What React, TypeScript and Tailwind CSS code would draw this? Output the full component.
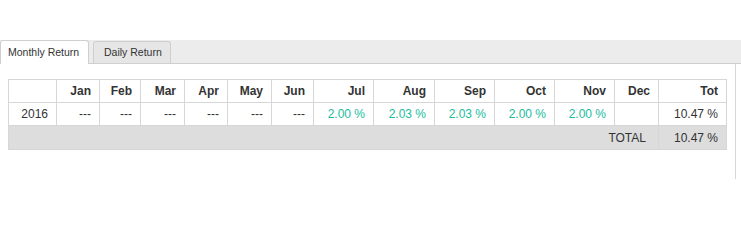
import React from "react";

type Cell = { value: string; positive?: boolean };

const MONTHS = ["Jan", "Feb", "Mar", "Apr", "May", "Jun", "Jul", "Aug", "Sep", "Oct", "Nov", "Dec"];

// column widths in px, first is the year column, last is the total
const COL_WIDTHS = [48, 43, 41, 44, 43, 44, 42, 60, 61, 60, 60, 60, 44, 68];

const ROW_2016: Cell[] = [
  { value: "---" },
  { value: "---" },
  { value: "---" },
  { value: "---" },
  { value: "---" },
  { value: "---" },
  { value: "2.00 %", positive: true },
  { value: "2.03 %", positive: true },
  { value: "2.03 %", positive: true },
  { value: "2.00 %", positive: true },
  { value: "2.00 %", positive: true },
  { value: "" },
];

const cellBase = "border border-[#d6d6d6] px-2 h-[23px] text-right";

const App: React.FC = () => {
  return (
    <div className="w-[741px] h-[250px] bg-white text-[12px] text-[#333] font-[family-name:'Liberation_Sans',Arial,sans-serif]">
      <div className="h-[40px]" />

      {/* tab strip */}
      <div className="h-[24px] bg-[#ececec] border-b border-[#cfcfcf] flex items-end gap-[4px] whitespace-nowrap text-[10.5px]">
        <div className="h-[24px] w-[89px] -mb-px bg-white border border-b-0 border-[#cfcfcf] rounded-t-[3px] flex items-center pl-[7px]">
          Monthly Return
        </div>
        <div className="h-[22px] w-[78px] bg-[#e6e6e6] border border-b-0 border-[#cfcfcf] rounded-t-[3px] flex items-center pl-[10px]">
          Daily Return
        </div>
      </div>

      {/* tab panel */}
      <div className="w-[736px] h-[115px] border-r border-[#d6d6d6] pt-[15px] pl-[8px]">
        <table className="table-fixed border-collapse w-[718px]">
          <colgroup>
            {COL_WIDTHS.map((w, i) => (
              <col key={i} style={{ width: w }} />
            ))}
          </colgroup>
          <thead>
            <tr>
              <th className={cellBase} />
              {MONTHS.map((m) => (
                <th key={m} className={`${cellBase} font-bold`}>
                  {m}
                </th>
              ))}
              <th className={`${cellBase} font-bold`}>Tot</th>
            </tr>
          </thead>
          <tbody>
            <tr>
              <td className={cellBase}>2016</td>
              {ROW_2016.map((c, i) => (
                <td key={i} className={`${cellBase} ${c.positive ? "text-[#1abc9c]" : ""}`}>
                  {c.value}
                </td>
              ))}
              <td className={cellBase}>10.47 %</td>
            </tr>
            <tr className="bg-[#dddddd]">
              <td colSpan={13} className="border border-[#d6d6d6] border-t-[#c4c4c4] border-t-dotted px-2 h-[24px] text-right pr-[12px]">
                TOTAL
              </td>
              <td className="border border-[#d6d6d6] border-t-[#c4c4c4] border-t-dotted px-2 h-[24px] text-right">10.47 %</td>
            </tr>
          </tbody>
        </table>
      </div>
    </div>
  );
};

export default App;
